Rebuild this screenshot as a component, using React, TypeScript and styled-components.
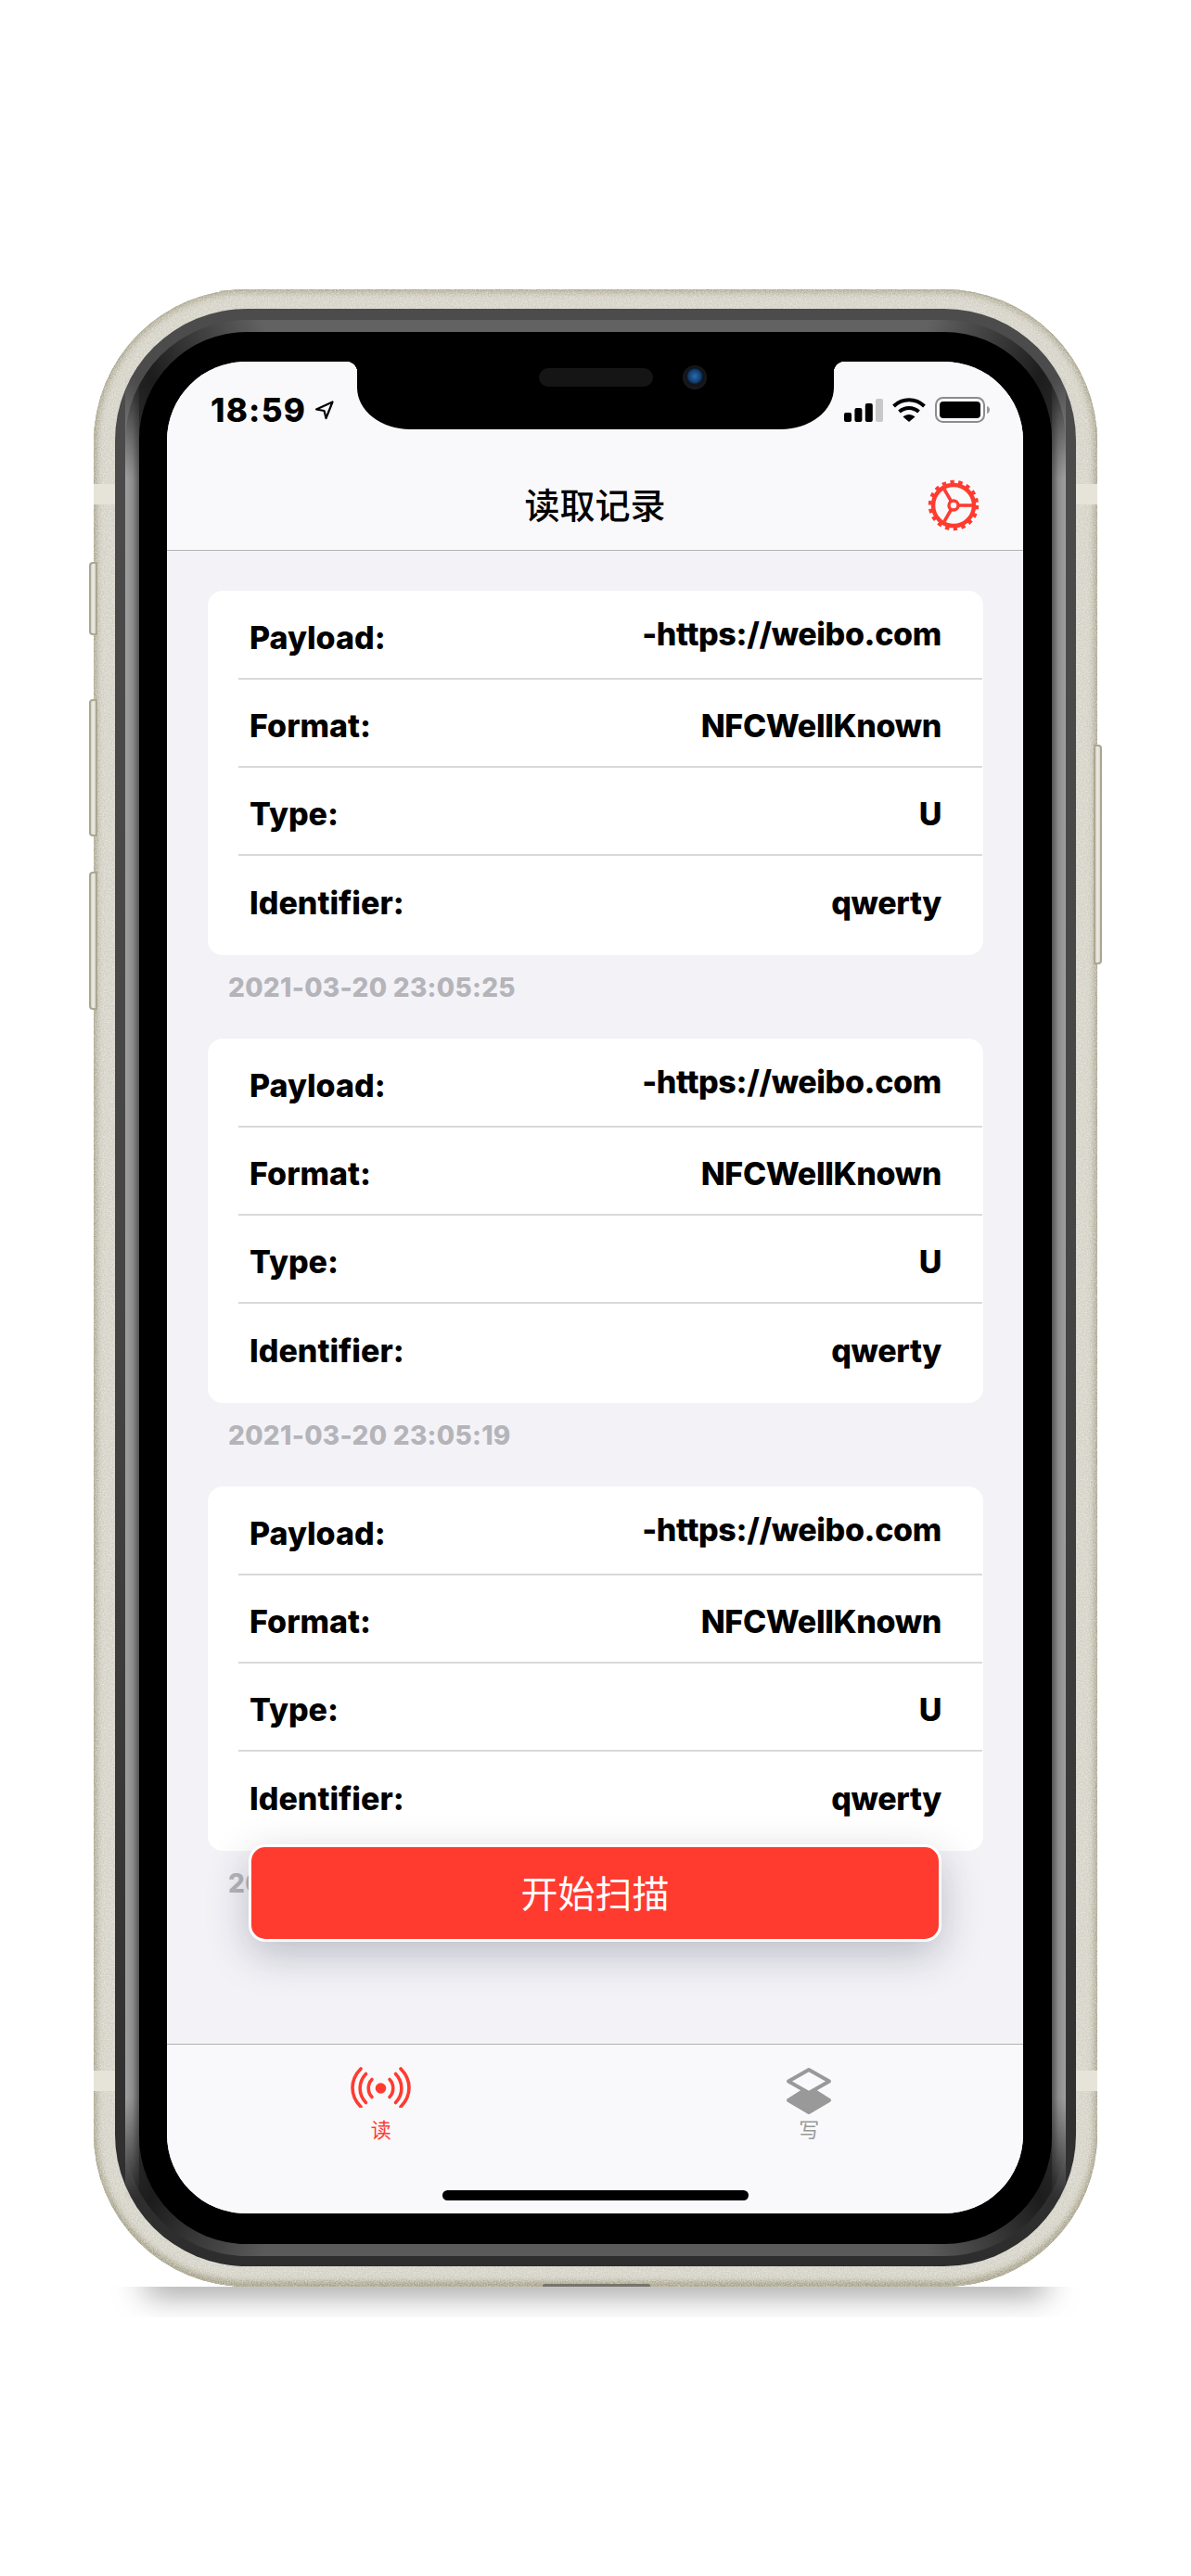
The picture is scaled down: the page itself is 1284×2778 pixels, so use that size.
import React from 'react';
import styled, { createGlobalStyle } from 'styled-components';

const GlobalStyle = createGlobalStyle`
  html, body {
    margin: 0;
    background: #fff;
  }
  * {
    box-sizing: border-box;
  }
`;

const Page = styled.div`
  height: 2778px;
  padding-top: 312px;
  display: flex;
  justify-content: center;
  overflow: hidden;
  font-family: Inter, "Liberation Sans", "Noto Sans CJK SC", sans-serif;
`;

const Frame = styled.div`
  position: relative;
  width: 1082px;
  height: 2154px;
  padding: 21px 23px 22px;
  display: flex;
  border-radius: 165px;
  background: #d3d0c5;
  box-shadow: inset 0 0 0 1px #a9a58f, inset 0 0 6px 4px rgba(160, 155, 130, 0.8), inset 0 -7px 6px -2px rgba(160, 155, 130, 0.9);
`;

const Grain = styled.svg`
  position: absolute;
  inset: 0;
  width: 100%;
  height: 100%;
  border-radius: 165px;
`;

const Band = styled.div<{ $top: number }>`
  position: absolute;
  left: 0;
  right: 0;
  top: ${(p) => p.$top}px;
  height: 22px;
  background: #e6e4d9;
`;

const SideKey = styled.div<{ $side: 'left' | 'right'; $top: number; $height: number }>`
  position: absolute;
  top: ${(p) => p.$top}px;
  height: ${(p) => p.$height}px;
  width: 9px;
  ${(p) => (p.$side === 'left' ? 'left: -5px; border-radius: 4px 0 0 4px;' : 'right: -5px; border-radius: 0 4px 4px 0;')}
  background: linear-gradient(90deg, #d6d3c8, #eceae2 50%, #d6d3c8);
  border: 2px solid #aba792;
`;

const GroundShadow = styled.div`
  position: absolute;
  top: 100%;
  left: -30px;
  right: -30px;
  height: 33px;
  overflow: hidden;
  &::before {
    content: '';
    position: absolute;
    top: -10px;
    left: 90px;
    right: 90px;
    height: 10px;
    box-shadow: 0 0 34px 4px rgba(0, 0, 0, 0.62);
  }
`;

const Seam = styled.div`
  position: absolute;
  left: 484px;
  bottom: 0;
  width: 116px;
  height: 3px;
  border-radius: 2px 2px 0 0;
  background: #77756a;
`;

const SteelRing = styled.div`
  position: relative;
  flex: 1;
  display: flex;
  padding: 12px 11px 11px;
  border-radius: 142px;
  background: linear-gradient(180deg, #4c4c4c 0, #454545 50%, #2d2d2d 100%);
`;

/* the glass ring goes dark where it turns round the corners, the conic stops sit on them */
const GlassRing = styled.div`
  position: relative;
  flex: 1;
  display: flex;
  padding: 13px 15px;
  border-radius: 131px;
  background: conic-gradient(
    #626262 0deg, #626262 19deg, #1c1c1c 26deg, #4a4a4a 33deg,
    #4a4a4a 147deg, #1c1c1c 154deg, #5a5a5a 161deg,
    #5a5a5a 199deg, #1c1c1c 206deg, #4a4a4a 213deg,
    #4a4a4a 327deg, #1c1c1c 334deg, #626262 341deg
  );
  &::before {
    content: '';
    position: absolute;
    inset: 0;
    background: linear-gradient(90deg, #a0a0a0 0, #8c8c8c 8px, #555 15px, transparent 15px, transparent calc(100% - 15px), #555 calc(100% - 15px), #8c8c8c calc(100% - 8px), #a0a0a0 100%);
    mask-image: linear-gradient(180deg, transparent 60px, #000 170px, #000 calc(100% - 170px), transparent calc(100% - 60px));
  }
`;

const Bezel = styled.div`
  position: relative;
  flex: 1;
  display: flex;
  padding: 32px 31px 33px 30px;
  border-radius: 116px;
  background: #000;
`;

const Screen = styled.div`
  position: relative;
  flex: 1;
  display: flex;
  flex-direction: column;
  overflow: hidden;
  border-radius: 85px;
  background: #f2f2f7;
`;

const Notch = styled.div`
  position: absolute;
  top: 0;
  left: 205px;
  width: 514px;
  height: 73px;
  padding: 7px 0 0 196px;
  display: flex;
  align-items: flex-start;
  gap: 32px;
  background: #000;
  border-radius: 0 0 57px 57px / 0 0 45px 45px;
  &::before,
  &::after {
    content: '';
    position: absolute;
    top: 0;
    width: 12px;
    height: 12px;
  }
  &::before {
    left: -12px;
    background: radial-gradient(circle at 0 100%, transparent 12px, #000 12.5px);
  }
  &::after {
    right: -12px;
    background: radial-gradient(circle at 100% 100%, transparent 12px, #000 12.5px);
  }
`;

const Speaker = styled.div`
  width: 123px;
  height: 20px;
  border-radius: 10px;
  background: #151515;
`;

const Camera = styled.div`
  width: 26px;
  height: 26px;
  margin-top: -3px;
  border-radius: 50%;
  background: radial-gradient(circle at 50% 45%, #2a6cb0 0, #123a6a 7px, #0a1a30 8.5px, #141414 10px, #1a1a1a 13px);
`;

const NavBar = styled.header`
  background: #f9f9fb;
  border-bottom: 1px solid #b2b2b2;
`;

const StatusBar = styled.div`
  height: 106px;
  padding: 38px 36px 0 47px;
  display: flex;
  justify-content: space-between;
  align-items: flex-start;
`;

const Clock = styled.div`
  display: flex;
  align-items: center;
  gap: 9px;
  height: 28px;
  font-size: 35px;
  font-weight: 800;
  letter-spacing: 1.2px;
  color: #000;
`;

const StatusIcons = styled.div`
  display: flex;
  align-items: flex-start;
  gap: 10px;
`;

const TitleRow = styled.div`
  height: 97px;
  padding: 0 47px;
  display: grid;
  grid-template-columns: 1fr auto 1fr;
  align-items: center;
`;

const Title = styled.h1`
  grid-column: 2;
  margin: -4px 0 0;
  font-family: "Noto Sans CJK SC", sans-serif;
  font-size: 38px;
  font-weight: 500;
  line-height: 44px;
  color: #000;
`;

const GearSlot = styled.div`
  grid-column: 3;
  display: flex;
  justify-content: flex-end;
`;

const Content = styled.main`
  position: relative;
  flex: 1;
  overflow: hidden;
  padding: 43px 43px 0 44px;
`;

const Card = styled.section`
  padding: 1px 0 12px;
  border-radius: 16px;
  background: #fff;
`;

const Row = styled.div`
  height: 95px;
  margin: 0 1px 0 33px;
  padding: 6px 44px 0 12px;
  display: flex;
  justify-content: space-between;
  align-items: center;
  border-bottom: 2px solid #d9d9dc;
  &:last-child {
    border-bottom: none;
  }
  font-size: 34px;
  font-weight: 800;
  color: #000;
`;

const Value = styled.span<{ $raised?: boolean }>`
  margin-bottom: ${(p) => (p.$raised ? 8 : 0)}px;
  letter-spacing: -0.35px;
`;

const Stamp = styled.div`
  height: 90px;
  padding: 18px 0 0 22px;
  font-size: 28px;
  line-height: 34px;
  font-weight: 800;
  letter-spacing: 0.3px;
  color: #b4b4b9;
`;

const ScanButton = styled.button`
  position: absolute;
  left: 88px;
  right: 88px;
  bottom: 110px;
  height: 105px;
  padding: 0 0 3px;
  border: 3px solid #fff;
  border-radius: 18px;
  background: #ff3b30;
  box-shadow: 0 14px 44px rgba(40, 40, 60, 0.26);
  font-family: "Noto Sans CJK SC", sans-serif;
  font-size: 40px;
  font-weight: 400;
  color: #fff;
`;

const TabBar = styled.nav`
  position: relative;
  height: 183px;
  padding-top: 24px;
  display: grid;
  grid-template-columns: 1fr 1fr;
  background: #f9f9fb;
  border-top: 1px solid #b2b2b2;
`;

const Tab = styled.div<{ $active?: boolean }>`
  display: flex;
  flex-direction: column;
  align-items: center;
  color: ${(p) => (p.$active ? '#ff3b30' : '#999999')};
`;

const TabIcon = styled.div`
  height: 52px;
`;

const TabLabel = styled.span`
  margin-top: 2px;
  font-family: "Noto Sans CJK SC", sans-serif;
  font-size: 22px;
  line-height: 24px;
`;

const HomeBar = styled.div`
  position: absolute;
  left: 297px;
  bottom: 14px;
  width: 330px;
  height: 11px;
  border-radius: 6px;
  background: #000;
`;

const records = [
  { time: '2021-03-20 23:05:25' },
  { time: '2021-03-20 23:05:19' },
  { time: '2021-03-20 23:05:12' },
];

const LocationIcon = () => (
  <svg width="21" height="22" viewBox="0 0 21 22" fill="none" stroke="#000" strokeWidth="2.2" strokeLinejoin="round">
    <path d="M2 10.500 19.500 2.500 12.500 20 10.500 12Z" />
  </svg>
);

const SignalIcon = () => (
  <svg width="42" height="28" viewBox="0 0 42 28">
    <rect x="0" y="17" width="8" height="10" rx="2" fill="#000" />
    <rect x="11.400" y="12" width="8" height="15" rx="2" fill="#000" />
    <rect x="22.800" y="7" width="8" height="20" rx="2" fill="#000" />
    <rect x="34" y="2" width="8" height="25" rx="2" fill="#c8c8c8" />
  </svg>
);

const WifiIcon = () => (
  <svg width="36" height="28" viewBox="0 0 36 28" fill="none" stroke="#000" strokeWidth="4">
    <path d="M1.500 10C11 1 25 1 34.500 10" />
    <path d="M7.500 16C13.500 10.500 22.500 10.500 28.500 16" />
    <path d="M18 27 11.500 21.500C15 18 21 18 24.500 21.500Z" fill="#000" stroke="none" />
  </svg>
);

const BatteryIcon = () => (
  <svg width="59" height="28" viewBox="0 0 59 28">
    <rect x="1" y="1" width="52" height="26" rx="7.500" fill="none" stroke="#8c8c8c" strokeWidth="2" />
    <rect x="5" y="5" width="44" height="18" rx="4" fill="#000" />
    <path d="M56 10c2 .5 3 2 3 4s-1 3.500-3 4z" fill="#9a9a9a" />
  </svg>
);

const GearIcon = () => {
  const spokes = [0, 120, 240];
  return (
    <svg width="56" height="56" viewBox="0 0 56 56" fill="none" stroke="#ff3b30">
      <circle cx="28" cy="28" r="22" strokeWidth="4.500" />
      <circle cx="28" cy="28" r="25.200" strokeWidth="4" strokeDasharray="4.400 4.400" />
      {spokes.map((a) => (
        <line key={a} x1="33" y1="28" x2="48" y2="28" strokeWidth="3.600" transform={`rotate(${-a} 28 28)`} />
      ))}
      <circle cx="28" cy="28" r="5" strokeWidth="3.400" />
    </svg>
  );
};

const AntennaIcon = () => (
  <svg width="65" height="44" viewBox="0 0 65 44" fill="none" stroke="currentColor" strokeWidth="3.600" strokeLinecap="round">
    <circle cx="32.500" cy="23" r="5.800" fill="currentColor" stroke="none" />
    <path d="M23 13.500c-5 5-5 14 0 19" />
    <path d="M42 13.500c5 5 5 14 0 19" />
    <path d="M16.500 7.500c-8.500 9-8.500 22 0 31" />
    <path d="M48.500 7.500c8.500 9 8.500 22 0 31" />
    <path d="M11 2c-12 12-12 29 0 41" />
    <path d="M54 2c12 12 12 29 0 41" />
  </svg>
);

const StackIcon = () => (
  <svg width="50" height="52" viewBox="0 0 50 52" strokeLinejoin="round">
    <path d="M25 22 47 36 25 49 3 36Z" fill="currentColor" stroke="currentColor" strokeWidth="4" />
    <path d="M25 3 47 15.500 25 28 3 15.500Z" fill="#f9f9fb" stroke="currentColor" strokeWidth="4" />
  </svg>
);

function App() {
  return (
    <>
      <GlobalStyle />
      <Page>
        <Frame>
          <GroundShadow />
          <Grain aria-hidden="true">
            <filter id="grain">
              <feTurbulence type="fractalNoise" baseFrequency="0.7" numOctaves="2" seed="4" />
              <feColorMatrix values="0 0 0 0 1  0 0 0 0 1  0 0 0 0 0.96  0.9 0 0 0 -0.28" />
            </filter>
            <rect width="100%" height="100%" filter="url(#grain)" rx="165" />
          </Grain>
          <Band $top={210} />
          <Band $top={1921} />
          <SideKey $side="left" $top={294} $height={79} />
          <SideKey $side="left" $top={442} $height={148} />
          <SideKey $side="left" $top={628} $height={149} />
          <SideKey $side="right" $top={491} $height={237} />
          <Seam />
          <SteelRing>
            <GlassRing>
              <Bezel>
                <Screen>
                  <Notch>
                    <Speaker />
                    <Camera />
                  </Notch>
                  <NavBar>
                    <StatusBar>
                      <Clock>
                        18:59
                        <LocationIcon />
                      </Clock>
                      <StatusIcons>
                        <SignalIcon />
                        <WifiIcon />
                        <BatteryIcon />
                      </StatusIcons>
                    </StatusBar>
                    <TitleRow>
                      <Title>读取记录</Title>
                      <GearSlot>
                        <GearIcon />
                      </GearSlot>
                    </TitleRow>
                  </NavBar>
                  <Content>
                    {records.map((r) => (
                      <div key={r.time}>
                        <Card>
                          <Row>
                            <span>Payload:</span>
                            <Value $raised>-https://weibo.com</Value>
                          </Row>
                          <Row>
                            <span>Format:</span>
                            <Value>NFCWellKnown</Value>
                          </Row>
                          <Row>
                            <span>Type:</span>
                            <Value>U</Value>
                          </Row>
                          <Row>
                            <span>Identifier:</span>
                            <Value>qwerty</Value>
                          </Row>
                        </Card>
                        <Stamp>{r.time}</Stamp>
                      </div>
                    ))}
                    <ScanButton>开始扫描</ScanButton>
                  </Content>
                  <TabBar>
                    <Tab $active>
                      <TabIcon>
                        <AntennaIcon />
                      </TabIcon>
                      <TabLabel>读</TabLabel>
                    </Tab>
                    <Tab>
                      <TabIcon>
                        <StackIcon />
                      </TabIcon>
                      <TabLabel>写</TabLabel>
                    </Tab>
                    <HomeBar />
                  </TabBar>
                </Screen>
              </Bezel>
            </GlassRing>
          </SteelRing>
        </Frame>
      </Page>
    </>
  );
}

export default App;
